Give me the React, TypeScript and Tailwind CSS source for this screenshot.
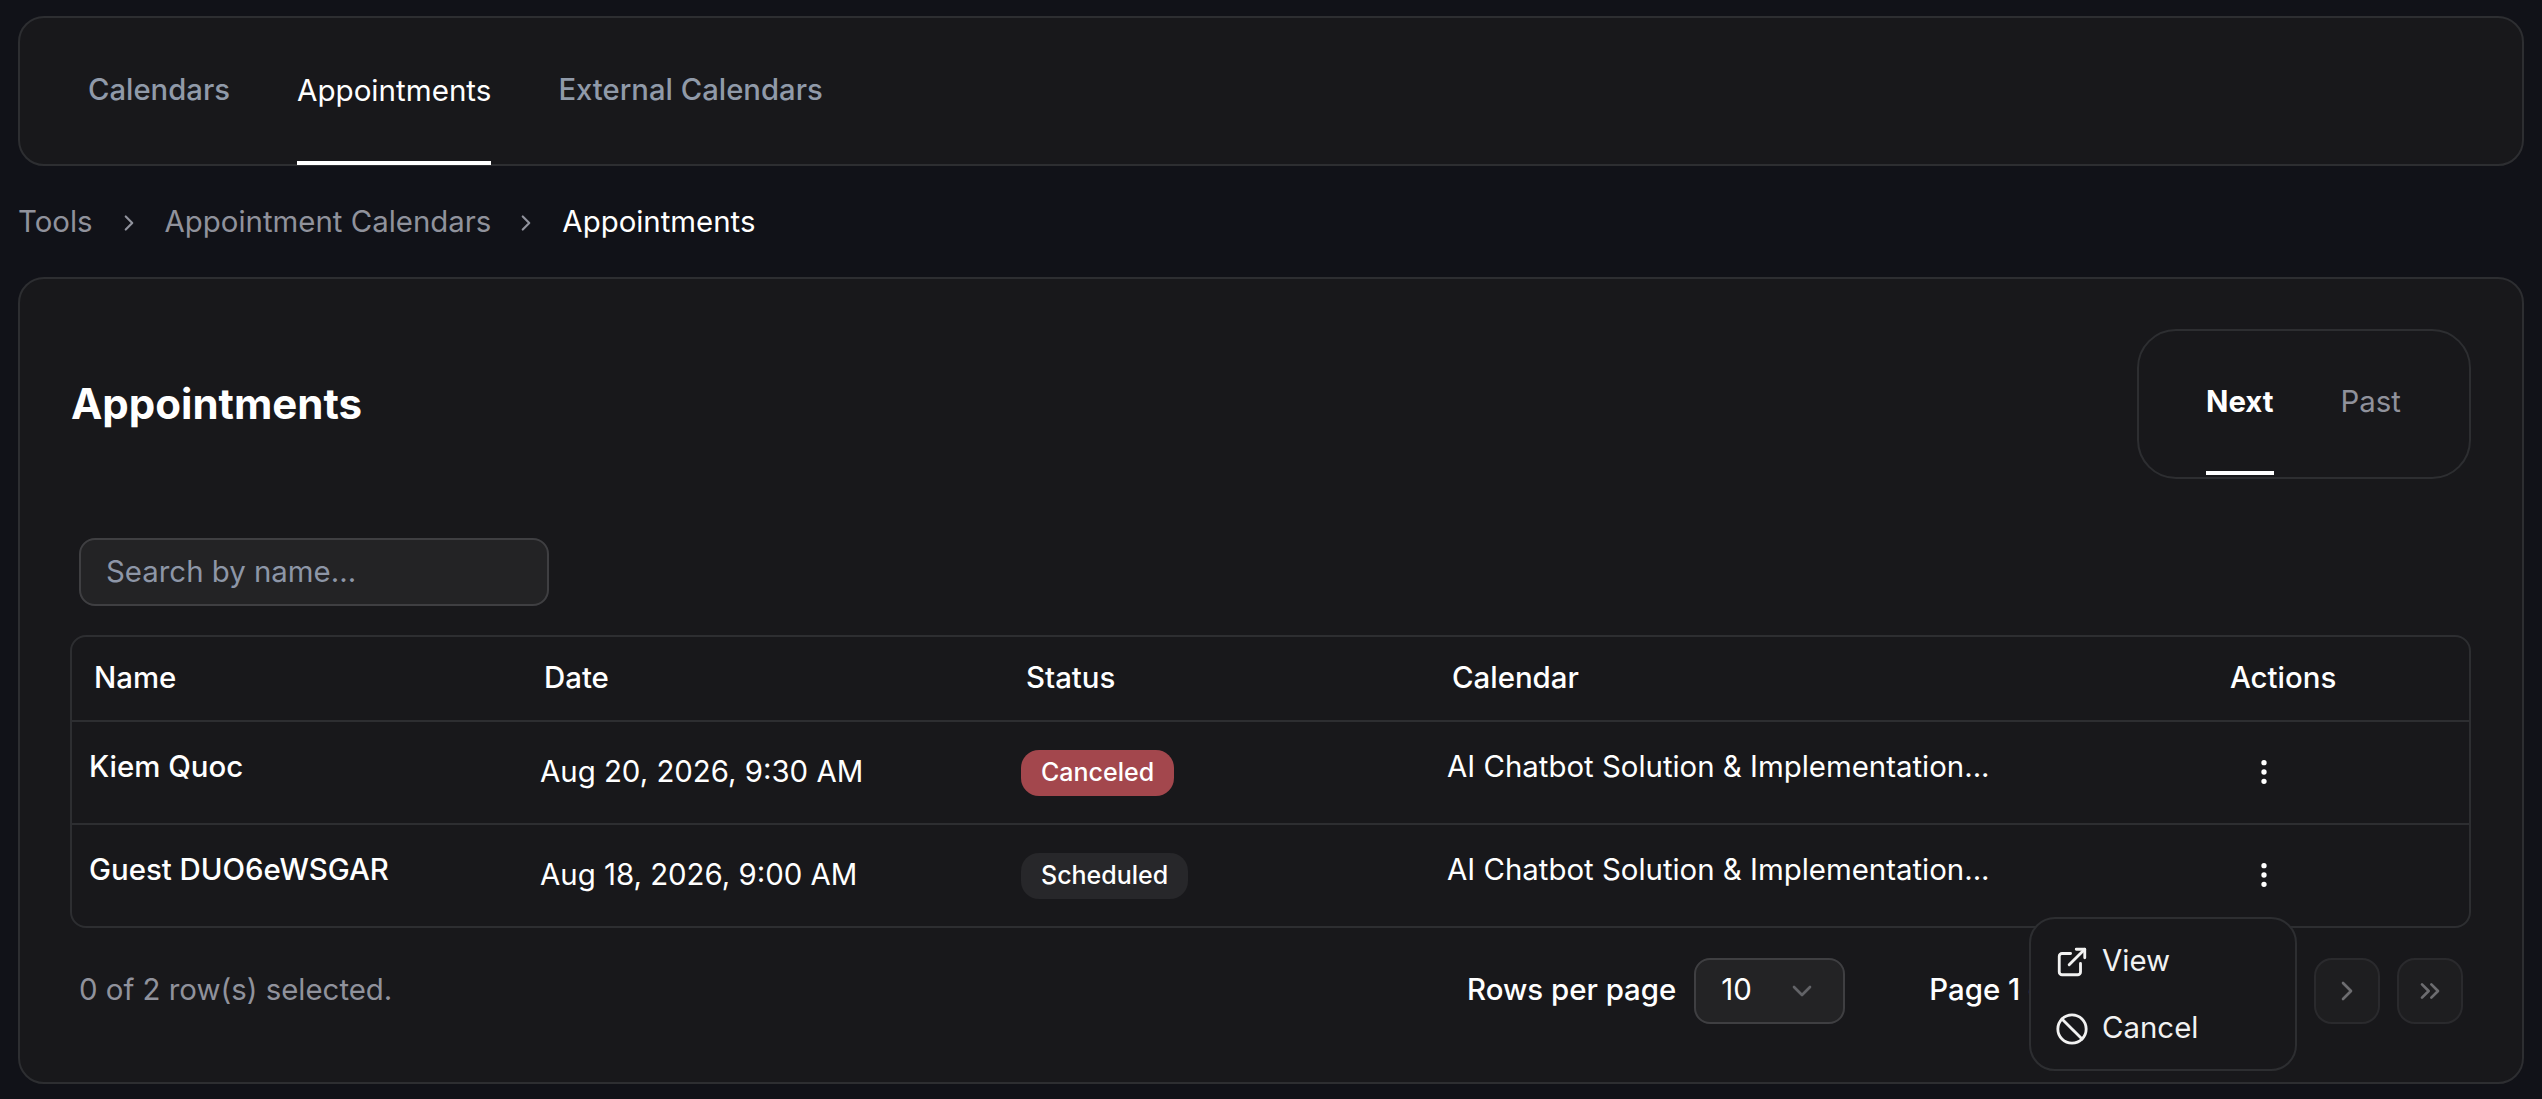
import { ChevronRight, ChevronDown, ChevronsRight, ChevronLeft, ChevronsLeft, EllipsisVertical, ExternalLink, Ban } from "lucide-react";

const rows = [
  { name: "Kiem Quoc", date: "Aug 20, 2026, 9:30 AM", status: "Canceled", cal: "AI Chatbot Solution & Implementation..." },
  { name: "Guest DUO6eWSGAR", date: "Aug 18, 2026, 9:00 AM", status: "Scheduled", cal: "AI Chatbot Solution & Implementation..." },
];

const grid = "grid grid-cols-[451px_481px_426px_779px_1fr]";

export default function App() {
  return (
    <div className="h-[1099px] w-[2542px] overflow-hidden bg-[#111218] px-[18px] pt-[16px] font-['Inter',sans-serif] text-[29.4px] text-white">
      <div className="flex h-[150px] items-stretch gap-[67px] rounded-[26px] border-2 border-[#2d2e31] bg-[#18181b] pl-[68px] text-[29.25px] font-medium">
        <div className="flex items-center border-y-4 border-transparent pb-[3px] text-[#909aa9]">Calendars</div>
        <div className="-mb-px flex items-center border-y-4 border-t-transparent border-b-white pb-[3px] text-[29.6px] font-normal">Appointments</div>
        <div className="flex items-center border-y-4 border-transparent pb-[3px] text-[#909aa9]">External Calendars</div>
      </div>

      <div className="flex h-[111px] items-center pt-[2px] text-[#90929c]">
        <span>Tools</span>
        <ChevronRight className="mx-[23px] h-[26px] w-[26px]" strokeWidth={2} />
        <span>Appointment Calendars</span>
        <ChevronRight className="mr-[23px] ml-[22px] h-[26px] w-[26px]" strokeWidth={2} />
        <span className="text-white">Appointments</span>
      </div>

      <div className="relative h-[807px] rounded-[26px] border-2 border-[#2d2e31] bg-[#18181b] px-[51px]">
        <div className="flex h-[259px] items-start justify-between">
          <h1 className="mt-[105px] text-[42px] leading-[40px] font-bold">Appointments</h1>
          <div className="mt-[50px] flex h-[150px] w-[334px] items-stretch rounded-[39px] border-2 border-[#2d2e31] pl-[67px]">
            <div className="mb-[2px] flex items-center border-y-4 border-t-transparent border-b-white pb-[2px] font-bold">Next</div>
            <div className="mb-[2px] ml-[67px] flex items-center border-y-4 border-transparent pb-[2px] text-[#90929c]">Past</div>
          </div>
        </div>

        <div className="ml-[8px] flex h-[68px] w-[470px] items-center rounded-[16px] border-2 border-[#3f3f42] bg-[#232325] px-[25px] text-[#8d96a7]">
          Search by name...
        </div>

        <div className="mt-[29px] -ml-px rounded-[16px] border-2 border-[#2d2e31]">
          <div className={`${grid} h-[85px] items-center border-b-2 border-[#2d2e31] font-medium`}>
            <div className="pl-[22px]">Name</div>
            <div className="pl-[21px]">Date</div>
            <div className="pl-[22px]">Status</div>
            <div className="pl-[22px]">Calendar</div>
            <div className="pl-[21px]">Actions</div>
          </div>
          {rows.map((r, i) => (
            <div key={r.name} className={`${grid} items-center ${i === 0 ? "h-[103px] border-b-2 border-[#2d2e31]" : "h-[101px]"}`}>
              <div className="pb-[10px] pl-[17px] font-medium">{r.name}</div>
              <div className="pl-[17px]">{r.date}</div>
              <div className="pl-[17px]">
                <span className={`inline-flex h-[46px] items-center rounded-[18px] px-[20px] text-[25px] font-medium ${r.status === "Canceled" ? "bg-[#a3474d]" : "bg-[#27272a]"}`}>
                  {r.status}
                </span>
              </div>
              <div className="pb-[10px] pl-[17px]">{r.cal}</div>
              <div className="pb-[2px] pl-[22px]">
                <div className="flex h-[65px] w-[65px] items-center justify-center">
                  <EllipsisVertical className="h-[32px] w-[32px]" strokeWidth={2} />
                </div>
              </div>
            </div>
          ))}
        </div>

        <div className="mt-[30px] mr-[8px] ml-[8px] flex h-[66px] items-center">
          <div className="pb-[2px] text-[#90929c]">0 of 2 row(s) selected.</div>
          <div className="ml-auto flex items-center font-medium">
            <span className="pb-[2px]">Rows per page</span>
            <div className="ml-[18px] flex h-[66px] w-[151px] items-center justify-between rounded-[16px] border-2 border-[#3f3f42] bg-[#232325] pr-[25px] pb-[1px] pl-[25px] font-normal">
              <span>10</span>
              <ChevronDown className="h-[32px] w-[32px] text-[#626367]" strokeWidth={2} />
            </div>
            <span className="ml-[84px] pb-[2px]">Page 1 of 1</span>
            <div className="ml-[71px] flex gap-[17px]">
              {[ChevronsLeft, ChevronLeft, ChevronRight, ChevronsRight].map((Ic, i) => (
                <div key={i} className="flex h-[66px] w-[66px] items-center justify-center rounded-[18px] border-2 border-[#2a2a2d] bg-[#1e1e20]">
                  <Ic className="h-[32px] w-[32px] text-[#6d6d70]" strokeWidth={2} />
                </div>
              ))}
            </div>
          </div>
        </div>

        <div className="absolute top-[638px] left-[2009px] flex h-[154px] w-[268px] flex-col justify-center rounded-[26px] border-2 border-[#2d2e31] bg-[#18181b] pt-[2px] pl-[24px] text-[#f2f2f2]">
          <div className="flex h-[66px] items-center gap-[13px]">
            <ExternalLink className="h-[34px] w-[34px]" strokeWidth={2} />
            <span>View</span>
          </div>
          <div className="flex h-[67px] items-center gap-[13px] pt-[1px]">
            <Ban className="h-[34px] w-[34px]" strokeWidth={2} />
            <span>Cancel</span>
          </div>
        </div>
      </div>
    </div>
  );
}
